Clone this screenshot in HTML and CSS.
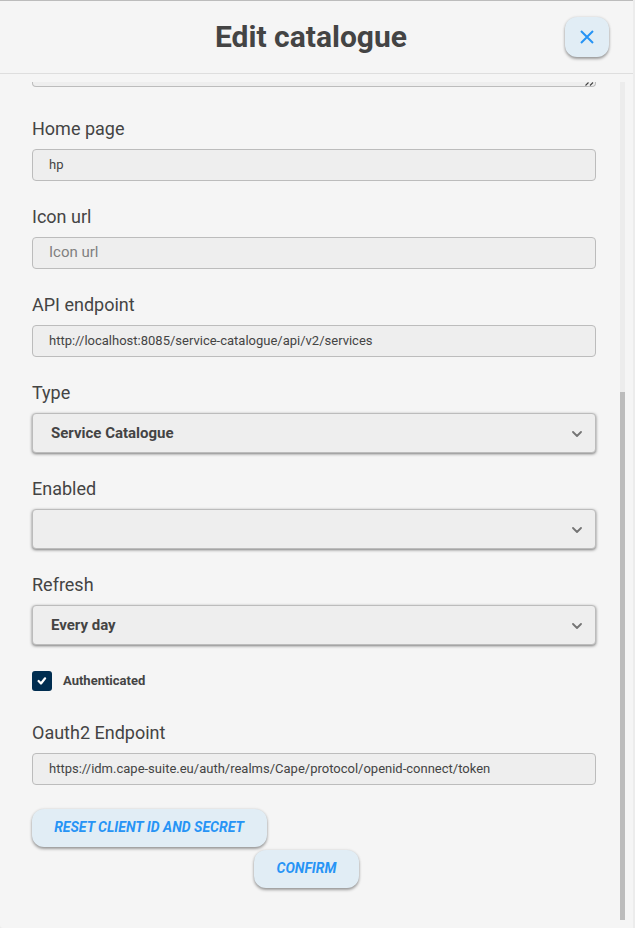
FILE: index.html
```html
<!DOCTYPE html>
<html lang="en">
<head>
<meta charset="utf-8">
<title>Edit catalogue</title>
<link rel="stylesheet" href="styles.css">
</head>
<body>
<main class="modal">
  <header class="header">
    <h1 class="title">Edit catalogue</h1>
    <button class="button close" aria-label="Close"><svg width="14" height="14" viewBox="0 0 14 14"><path d="M1 1l12 12M13 1L1 13" fill="none" stroke="currentColor" stroke-width="2"/></svg></button>
  </header>
  <div class="body">
    <form class="form">
      <div class="textarea-end"><svg width="9" height="5" viewBox="0 0 9 5"><path d="M.5 3.5L3.5.5M5 3.5l3-3" fill="none" stroke="#444" stroke-width="1.1"/></svg></div>
      <div class="field"><label class="label" for="home">Home page</label><input class="input" id="home" value="hp"></div>
      <div class="field"><label class="label" for="icon">Icon url</label><input class="input" id="icon" placeholder="Icon url"></div>
      <div class="field"><label class="label" for="api">API endpoint</label><input class="input" id="api" value="http://localhost:8085/service-catalogue/api/v2/services"></div>
      <div class="field"><span class="label">Type</span><div class="select"><span>Service Catalogue</span><svg width="10" height="7" viewBox="0 0 10 7"><path d="M1 2l4 4 4-4" /></svg></div></div>
      <div class="field"><span class="label">Enabled</span><div class="select"><span></span><svg width="10" height="7" viewBox="0 0 10 7"><path d="M1 2l4 4 4-4" /></svg></div></div>
      <div class="field"><span class="label">Refresh</span><div class="select"><span>Every day</span><svg width="10" height="7" viewBox="0 0 10 7"><path d="M1 2l4 4 4-4" /></svg></div></div>
      <div class="check-row"><span class="checkbox"><svg width="10" height="8" viewBox="0 0 10 8"><path d="M1.6 4l2.4 2.5L8.1 1.3" fill="none" stroke="#fff" stroke-width="2.2" stroke-linecap="round" stroke-linejoin="round"/></svg></span><span class="check-label">Authenticated</span></div>
      <div class="field"><label class="label" for="oauth">Oauth2 Endpoint</label><input class="input" id="oauth" value="https://idm.cape-suite.eu/auth/realms/Cape/protocol/openid-connect/token"></div>
      <button class="button action reset" type="button">Reset client ID and secret</button>
      <button class="button action confirm" type="button">Confirm</button>
    </form>
    <div class="scrollbar"><div class="thumb"></div></div>
  </div>
</main>
</body>
</html>
```
FILE: styles.css
```css
* { box-sizing: border-box; }
body { margin: 0; background: #ececec; color: #444; font-family: Roboto, sans-serif; }
.modal { width: 633px; height: 928px; background: #f5f5f5; border-top: 1px solid #bcbcbc; border-bottom-left-radius: 3px; overflow: hidden; }
.header { height: 73px; border-bottom: 1px solid #dedede; display: grid; grid-template-columns: 70px 1fr 44px; column-gap: 0; padding-right: 24px; }
.title { grid-column: 2; margin: 0; text-align: center; font-size: 30px; line-height: 40px; padding-top: 16px; padding-right: 13px; font-weight: 700; }
.button { border: 0; background: #e1edf5; color: #2794f5; box-shadow: 0 2px 3px rgba(0,0,0,.35), 0 0 3px rgba(0,0,0,.12); border-radius: 12px; font-family: Roboto, sans-serif; display: flex; align-items: center; justify-content: center; padding: 0; }
.close { width: 44px; height: 40px; margin-top: 16px; }
.body { display: flex; margin-top: 8px; height: 838px; }
.form { width: 564px; margin-left: 32px; display: flex; flex-direction: column; }
.textarea-end { height: 5px; background: #eee; border: 1px solid #bcbcbc; border-top: 0; border-radius: 0 0 4px 4px; margin-bottom: 30px; display: flex; justify-content: flex-end; flex: none; padding-right: 1px; overflow: hidden; }
.field { margin-bottom: 24px; }
.label { display: block; height: 24px; line-height: 24px; font-size: 18px; margin-bottom: 8px; }
.input { display: block; width: 100%; height: 32px; border: 1px solid #bcbcbc; border-radius: 4px; background: #eee; color: #444; font: 13px Roboto, sans-serif; padding: 0 16px 2px; outline: 0; }
.input::placeholder { color: #808080; font-size: 15px; opacity: 1; }
.select { height: 40px; border: 1px solid #bcbcbc; border-radius: 4px; background: #eee; display: flex; align-items: center; justify-content: space-between; padding: 0 13px 0 18px; font-size: 15px; font-weight: 700; box-shadow: 0 1px 3px rgba(0,0,0,.5); }
.select path { fill: none; stroke: #747474; stroke-width: 1.8; stroke-linecap: round; stroke-linejoin: round; }
.check-row { display: flex; align-items: center; gap: 11px; height: 20px; margin: 2px 0 30px; }
.checkbox { width: 20px; height: 20px; background: #002d50; border-radius: 3px; display: flex; align-items: center; justify-content: center; }
.check-label { font-size: 13px; font-weight: 700; padding-bottom: 2px; }
.action { height: 38px; font-size: 14px; font-weight: 700; font-style: italic; text-transform: uppercase; flex: none; padding-bottom: 2px; }
.reset { width: 235px; margin-bottom: 3px; padding-right: 1px; }
.confirm { width: 105px; margin-left: 222px; }
.scrollbar { width: 5px; margin-left: 24px; background: #ececec; }
.thumb { height: 528px; margin-top: 310px; background: #bcbcbc; }
```
